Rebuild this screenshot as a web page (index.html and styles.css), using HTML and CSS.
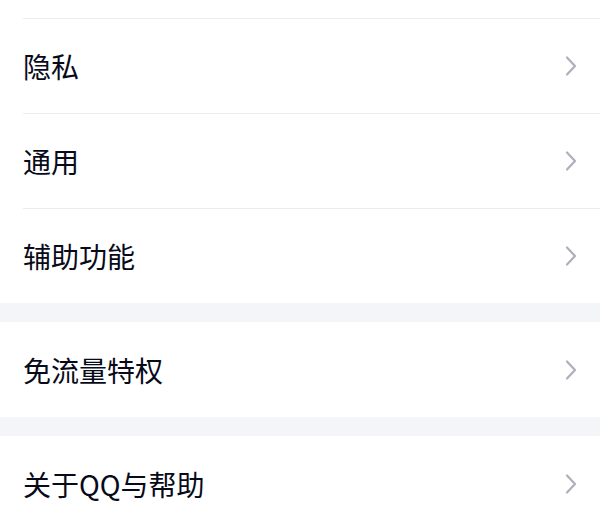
FILE: index.html
```html
<!DOCTYPE html>
<html lang="zh-CN">

<head>
    <meta charset="UTF-8">
    <meta name="viewport" content="width=device-width, initial-scale=1.0">
    <title>设置</title>
    <link rel="stylesheet" href="styles.css">
</head>

<body>
    <div class="settings">
        <div class="group">
            <div class="row-tail"></div>
            <div class="row">
                <span class="label">隐私</span>
                <svg class="arrow" viewBox="0 0 14 24"><path d="M3 3.5 L11 12 L3 20.5"/></svg>
            </div>
            <div class="row">
                <span class="label">通用</span>
                <svg class="arrow" viewBox="0 0 14 24"><path d="M3 3.5 L11 12 L3 20.5"/></svg>
            </div>
            <div class="row">
                <span class="label">辅助功能</span>
                <svg class="arrow" viewBox="0 0 14 24"><path d="M3 3.5 L11 12 L3 20.5"/></svg>
            </div>
        </div>

        <div class="group">
            <div class="row">
                <span class="label">免流量特权</span>
                <svg class="arrow" viewBox="0 0 14 24"><path d="M3 3.5 L11 12 L3 20.5"/></svg>
            </div>
        </div>

        <div class="group">
            <div class="row">
                <span class="label">关于QQ与帮助</span>
                <svg class="arrow" viewBox="0 0 14 24"><path d="M3 3.5 L11 12 L3 20.5"/></svg>
            </div>
        </div>
    </div>
</body>

</html>
```

FILE: styles.css
```css
* {
    box-sizing: border-box;
    margin: 0;
    padding: 0;
}

body {
    background: #f4f5f9;
    font-family: "Noto Sans CJK SC", "Noto Sans", sans-serif;
}

.settings {
    display: flex;
    flex-direction: column;
    gap: 19px;
}

.group {
    background: #ffffff;
}

.row-tail {
    height: 18px;
}

.row {
    height: 95px;
    margin-left: 23px;
    padding-right: 22px;
    display: flex;
    align-items: center;
    justify-content: space-between;
}

.row-tail + .row,
.row + .row {
    border-top: 1px solid #ebecf1;
}

.label {
    font-size: 28px;
    color: #070a18;
}

.arrow {
    width: 14px;
    height: 24px;
    fill: none;
    stroke: #adafbb;
    stroke-width: 2.2;
    stroke-linecap: round;
    stroke-linejoin: round;
}
```
